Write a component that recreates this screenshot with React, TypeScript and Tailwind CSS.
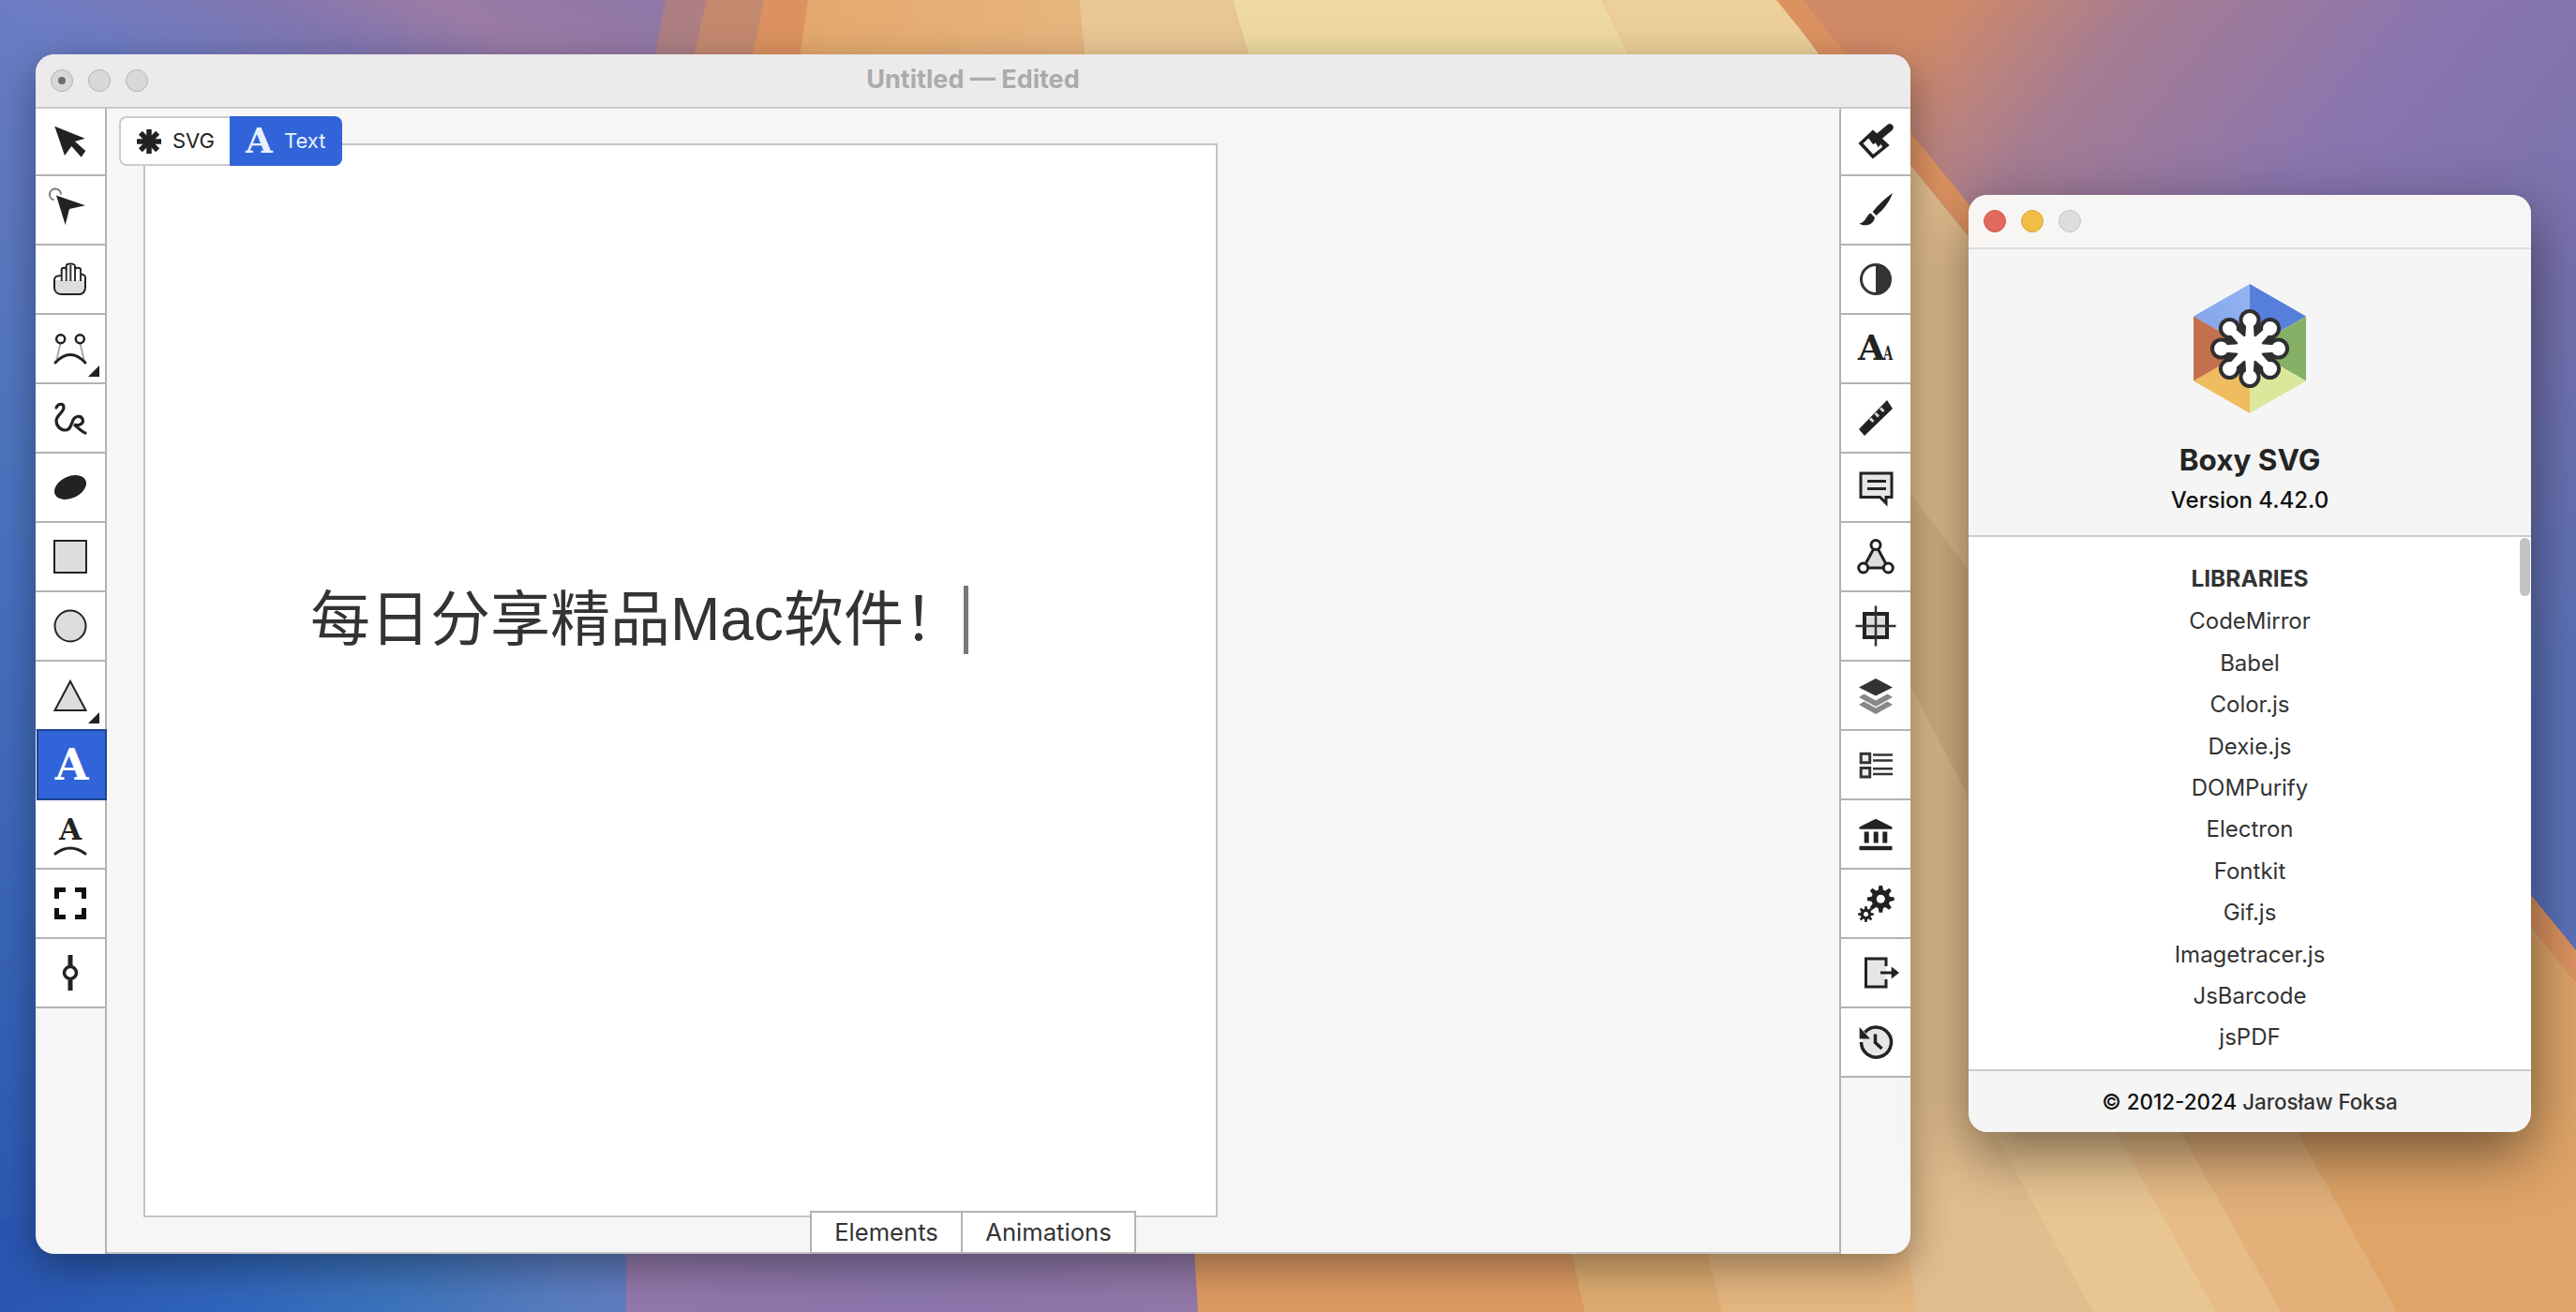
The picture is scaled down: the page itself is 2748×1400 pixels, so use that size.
import type { ReactNode } from "react";

const LIBRARIES = [
  "CodeMirror",
  "Babel",
  "Color.js",
  "Dexie.js",
  "DOMPurify",
  "Electron",
  "Fontkit",
  "Gif.js",
  "Imagetracer.js",
  "JsBarcode",
  "jsPDF",
];

function gearPath(cx: number, cy: number, ro: number, ri: number, n: number) {
  const pts: string[] = [];
  const step = (Math.PI * 2) / n;
  for (let i = 0; i < n; i++) {
    const a = i * step - Math.PI / 2;
    const list: [number, number][] = [
      [ri, a - step * 0.34],
      [ro, a - step * 0.16],
      [ro, a + step * 0.16],
      [ri, a + step * 0.34],
    ];
    for (const [r, t] of list) {
      pts.push(`${(cx + r * Math.cos(t)).toFixed(2)},${(cy + r * Math.sin(t)).toFixed(2)}`);
    }
  }
  return pts.join(" ");
}

function Icon({ children }: { children: ReactNode }) {
  return (
    <svg width="36" height="36" viewBox="0 0 36 36" className="overflow-visible">
      {children}
    </svg>
  );
}

const DARK = "#222222";
const SOFT = "#dddddd";
const HAND =
  "M1 19C1 16 3 14.500 5 14.500L8.700 14V8C8.700 5 13.700 5 13.700 8V4C13.700 .8 23 .8 23 4V8C23 5 29 5 29 8V13C31 12.500 34 13.500 34 16V27C34 31 31 34 28 34H9C4 34 1 31 1 27Z";

const leftIcons: ReactNode[] = [
  <Icon>
    <polygon points="1.3,1.7 33.7,14.7 23,18 34.3,28 29.7,34.7 19.3,23 12,33" fill={DARK} />
  </Icon>,
  <Icon>
    <path d="M0.5 7.3A6 6 0 1 1 8 1.5" fill="none" stroke="#777" strokeWidth="2" />
    <polygon points="3,2.5 34,13.3 17,17 12.7,34" fill={DARK} />
  </Icon>,
  <Icon>
    <path d={HAND} fill="#fff" />
    <path d="M2 19H33V27C33 31 31 33 28 33H9C4 33 2 31 2 27Z" fill={SOFT} />
    <path d={HAND} fill="none" stroke={DARK} strokeWidth="2" />
    <path d="M8.700 14V20M13.700 7V20M18.300 3V20M23 7V20M29 8V20" stroke="#333" strokeWidth="2" fill="none" />
  </Icon>,
  <Icon>
    <path d="M7.700 11L3 32M28.300 11L33 32" stroke="#aaa" strokeWidth="2" />
    <circle cx="7.700" cy="7.700" r="4.500" fill="#fff" stroke={DARK} strokeWidth="2.500" />
    <circle cx="28.300" cy="7.700" r="4.500" fill="#fff" stroke={DARK} strokeWidth="2.500" />
    <path d="M2 33Q18 16 34 33" fill="none" stroke={DARK} strokeWidth="3" strokeLinecap="round" />
  </Icon>,
  <Icon>
    <path
      d="M3 7C5 2 11 2 11 7C11 12 3 15 3 21C3 27 8 31 13 31C18 31 19 25 21 20C23 16 29 15 31 19C33 24 27 27 22 25C26 28 30 33 34 34"
      fill="none"
      stroke={DARK}
      strokeWidth="3.200"
      strokeLinecap="round"
    />
  </Icon>,
  <Icon>
    <ellipse cx="18" cy="18" rx="18" ry="11.500" transform="rotate(-25 18 18)" fill={DARK} />
  </Icon>,
  <Icon>
    <rect x="1" y="1" width="34" height="34" fill={SOFT} stroke={DARK} strokeWidth="2" />
  </Icon>,
  <Icon>
    <circle cx="18" cy="18" r="16.500" fill={SOFT} stroke={DARK} strokeWidth="2" />
  </Icon>,
  <Icon>
    <polygon points="18,3 34.500,34 1.500,34" fill={SOFT} stroke={DARK} strokeWidth="2" />
  </Icon>,
  null,
  <Icon>
    <text x="18" y="24" textAnchor="middle" fontSize="31" fontWeight="700" fill={DARK} className="font-['DejaVu_Serif',serif]">
      A
    </text>
    <path d="M2 39Q18 27 34 39" fill="none" stroke={DARK} strokeWidth="3" strokeLinecap="round" />
  </Icon>,
  <Icon>
    <path
      d="M1 1H13V6H6V13H1ZM35 1H23V6H30V13H35ZM1 35H13V30H6V23H1ZM35 35H23V30H30V23H35Z"
      fill="#111"
    />
  </Icon>,
  <Icon>
    <path d="M18 -1V10M18 26V37" stroke={DARK} strokeWidth="5" />
    <circle cx="18" cy="18" r="6.500" fill="#fff" stroke={DARK} strokeWidth="3.500" />
  </Icon>,
];

const rightIcons: ReactNode[] = [
  <Icon>
    <path d="M21 13L33 3" stroke={DARK} strokeWidth="7.500" strokeLinecap="round" />
    <polygon points="2,20 15,8 30,22 15,34" fill="#fff" stroke={DARK} strokeWidth="3.500" />
    <polygon points="15,8 30,22 26,25 23.500,21 20.500,24 18,19.500 15,21 10,14" fill={DARK} />
  </Icon>,
  <Icon>
    <path d="M36 0C30 4 21 12 14.700 20L18.500 24C26 18 33 9 36 0Z" fill={DARK} />
    <path d="M12.500 21.500C8 23 8 31 .5 32.500C5 36 15.500 35 17 26Z" fill={DARK} />
  </Icon>,
  <Icon>
    <circle cx="18" cy="18" r="15.500" fill="#fff" stroke="#333" strokeWidth="3" />
    <path d="M18 2.500A15.500 15.500 0 0 1 18 33.500Z" fill="#333" />
  </Icon>,
  <Icon>
    <text x="-1" y="30" fontSize="37" fontWeight="700" fill={DARK} className="font-['DejaVu_Serif',serif]">
      A
    </text>
    <text
      transform="translate(26 30) scale(0.65 1)"
      fontSize="20"
      fontWeight="700"
      fill={DARK}
      className="font-['DejaVu_Serif',serif]"
    >
      A
    </text>
  </Icon>,
  <Icon>
    <polygon points="0,30 30,-1 36,8 6,37" fill={DARK} />
    <path d="M12 18.500L15.500 22M17.500 13L21 16.500M23 7.500L26.500 11" stroke="#d5d5d5" strokeWidth="3" />
  </Icon>,
  <Icon>
    <path d="M2 3H35V28.500H29V35L22.500 28.500H2Z" fill="#e6e6e6" stroke={DARK} strokeWidth="3" />
    <path d="M9 11.500H29M9 19.500H29" stroke={DARK} strokeWidth="3" />
  </Icon>,
  <Icon>
    <polygon points="18,5.500 4.700,30 31.300,30" fill={SOFT} stroke={DARK} strokeWidth="3" />
    <circle cx="18" cy="5.500" r="5" fill="#fff" stroke={DARK} strokeWidth="3" />
    <circle cx="4.700" cy="30" r="5" fill="#fff" stroke={DARK} strokeWidth="3" />
    <circle cx="31.300" cy="30" r="5" fill="#fff" stroke={DARK} strokeWidth="3" />
  </Icon>,
  <Icon>
    <rect x="6" y="5" width="24" height="25" fill={SOFT} stroke={DARK} strokeWidth="4" />
    <path d="M18 -3.500V39.500M-3.500 18H39.500" stroke="#333" strokeWidth="2.500" />
  </Icon>,
  <Icon>
    <polygon points="18,0 36,9.500 18,18.500 0,9.500" fill="#333" />
    <path d="M0 20L5.500 16.500L18 23.500L30.500 16.500L36 20L18 30Z" fill="#888" />
    <path d="M0 28L5.500 24.500L18 31.500L30.500 24.500L36 28L18 38Z" fill="#888" />
  </Icon>,
  <Icon>
    <rect x="2.200" y="6.300" width="9.500" height="9.500" fill="#eee" stroke="#333" strokeWidth="3" />
    <rect x="2.200" y="21.500" width="9.500" height="9.500" fill="#eee" stroke="#333" strokeWidth="3" />
    <path d="M15 7.500H36M15 13.500H36M15 22.300H36M15 28H36" stroke="#333" strokeWidth="2.500" />
  </Icon>,
  <Icon>
    <polygon points="18,1.800 35.500,10.500 35.500,12.800 .5,12.800 .5,10.500" fill={DARK} />
    <rect x="5.700" y="15.500" width="5" height="12" fill={DARK} />
    <rect x="15.700" y="15.500" width="5" height="12" fill={DARK} />
    <rect x="25.300" y="15.500" width="5" height="12" fill={DARK} />
    <rect x=".5" y="30.800" width="35" height="4.400" fill={DARK} />
  </Icon>,
  <Icon>
    <polygon points={gearPath(23.3, 13.3, 14.5, 10, 8)} fill={DARK} />
    <circle cx="23.300" cy="13.300" r="4.500" fill="#fff" />
    <polygon points={gearPath(7.5, 29.5, 8.5, 5.8, 8)} fill={DARK} />
    <circle cx="7.500" cy="29.500" r="2.500" fill="#fff" />
  </Icon>,
  <Icon>
    <path d="M29 11V3H7.500V33H29V25" fill="#e6e6e6" stroke={DARK} strokeWidth="3" />
    <path d="M23 18H36" stroke={DARK} strokeWidth="3" />
    <polygon points="34.700,11.500 43,18 34.700,24.500" fill={DARK} />
  </Icon>,
  <Icon>
    <path d="M6.500 7.500A16 16 0 1 1 2.500 18" fill="#e6e6e6" stroke={DARK} strokeWidth="3.500" />
    <polygon points=".7,2 .7,14.500 12,14.500" fill={DARK} />
    <path d="M17.500 9.500V18.500L24.500 25" fill="none" stroke={DARK} strokeWidth="3.500" />
  </Icon>,
];

function Corner() {
  return (
    <svg width="12" height="12" viewBox="0 0 12 12" className="absolute right-[6px] bottom-[6px]">
      <polygon points="12,0 12,12 0,12" fill="#222" />
    </svg>
  );
}

function ToolButton({ icon, first, corner }: { icon: ReactNode; first?: boolean; corner?: boolean }) {
  return (
    <div
      className={`relative flex ${first ? "h-[72px]" : "h-[74px]"} w-full shrink-0 items-center justify-center border-b-2 border-[#b3b3b3] bg-white`}
    >
      {icon}
      {corner && <Corner />}
    </div>
  );
}

function Light({ color, edge, dot }: { color: string; edge: string; dot?: boolean }) {
  return (
    <div
      className="flex h-[24px] w-[24px] items-center justify-center rounded-full border"
      style={{ backgroundColor: color, borderColor: edge }}
    >
      {dot && <div className="h-[8px] w-[8px] rounded-full bg-[#6e6e6e]" />}
    </div>
  );
}

function Wallpaper() {
  return (
    <svg className="absolute inset-0" width="2748" height="1400" viewBox="0 0 2748 1400">
      <defs>
        <linearGradient id="blue" gradientUnits="userSpaceOnUse" x1="0" y1="1400" x2="700" y2="0">
          <stop offset="0" stopColor="#2a56b2" />
          <stop offset="0.5" stopColor="#4a74c0" />
          <stop offset="0.8" stopColor="#6b7cc4" />
          <stop offset="0.88" stopColor="#8276b0" />
          <stop offset="0.93" stopColor="#9a7ba5" />
          <stop offset="1" stopColor="#8f77a8" />
        </linearGradient>
        <linearGradient id="floor" gradientUnits="userSpaceOnUse" x1="0" y1="0" x2="668" y2="0">
          <stop offset="0" stopColor="#2a56b2" />
          <stop offset="0.37" stopColor="#3066bc" />
          <stop offset="0.64" stopColor="#3d74bc" />
          <stop offset="0.9" stopColor="#5a7cc0" />
          <stop offset="1" stopColor="#5f7cc0" />
        </linearGradient>
        <linearGradient id="right" gradientUnits="userSpaceOnUse" x1="2000" y1="100" x2="2748" y2="700">
          <stop offset="0" stopColor="#d08a68" />
          <stop offset="0.17" stopColor="#a67c92" />
          <stop offset="0.42" stopColor="#8b76ae" />
          <stop offset="0.7" stopColor="#7a72ae" />
          <stop offset="1" stopColor="#5a72b8" />
        </linearGradient>
        <linearGradient id="peach" gradientUnits="userSpaceOnUse" x1="862" y1="0" x2="1151" y2="0">
          <stop offset="0" stopColor="#e4a96e" />
          <stop offset="1" stopColor="#e7b57f" />
        </linearGradient>
        <linearGradient id="purple" gradientUnits="userSpaceOnUse" x1="668" y1="0" x2="1278" y2="0">
          <stop offset="0" stopColor="#9278aa" />
          <stop offset="0.5" stopColor="#8c76ac" />
          <stop offset="1" stopColor="#9278a8" />
        </linearGradient>
      </defs>
      <rect x="0" y="0" width="2748" height="1400" fill="url(#right)" />
      <polygon points="0,0 710,0 668,1400 0,1400" fill="url(#blue)" />
      <rect x="0" y="1300" width="668" height="100" fill="url(#floor)" />
      <polygon points="668,1300 1272,1300 1278,1400 668,1400" fill="url(#purple)" />

      <polygon points="710,0 754,0 740,60 698,60" fill="#ad7f84" />
      <polygon points="754,0 815,0 803,60 740,60" fill="#c48a70" />
      <polygon points="815,0 862,0 853,60 803,60" fill="#dc9260" />
      <polygon points="862,0 1151,0 1157,60 853,60" fill="url(#peach)" />
      <polygon points="1151,0 1315,0 1332,60 1157,60" fill="#e9c794" />
      <polygon points="1315,0 1709,0 1739,60 1332,60" fill="#eedaa0" />
      <polygon points="1709,0 1898,0 1942,60 1739,60" fill="#eccf99" />

      <polygon points="1895,0 1923,0 2748,1014 2748,1049" fill="#dc9260" />
      <polygon points="1942,58 2748,1049 2748,1400 1300,1400 1300,58" fill="#e2bd8e" />
      <polygon points="1272,1300 1668,1300 1691,1400 1278,1400" fill="#dd9a62" />
      <polygon points="1668,1300 1812,1300 1837,1400 1691,1400" fill="#deac72" />
      <polygon points="1812,1300 2030,1300 2045,1400 1837,1400" fill="#e4b680" />

      <polygon points="2100,1160 2100,1000 2142,1000 2364,1400 2233,1400" fill="#e9c592" />
      <polygon points="2142,1000 2211,1000 2433,1400 2364,1400" fill="#e7bc86" />
      <polygon points="2211,1000 2335,1000 2557,1400 2433,1400" fill="#e3b07a" />
      <polygon points="2335,1000 2500,744 2748,1049 2748,1400 2557,1400" fill="#dea468" />
      <polygon points="2038,527 2099,607 2099,848 2038,732" fill="#c9a878" opacity="0.5" />
    </svg>
  );
}

function Logo() {
  const angles = [0, 45, 90, 135, 180, 225, 270, 315];
  return (
    <svg width="120" height="138" viewBox="0 0 120 138">
      <defs>
        <linearGradient id="tl" x1="1" y1="0" x2="0" y2="1">
          <stop offset="0" stopColor="#94b4f2" />
          <stop offset="1" stopColor="#7fa2e8" />
        </linearGradient>
      </defs>
      <polygon points="60,69 60,0 0,34.500" fill="url(#tl)" />
      <polygon points="60,69 60,0 120,34.500" fill="#567fdc" />
      <polygon points="60,69 120,34.500 120,103.500" fill="#85b065" />
      <polygon points="60,69 120,103.500 60,138" fill="#dbe89c" />
      <polygon points="60,69 60,138 0,103.500" fill="#efbc60" />
      <polygon points="60,69 0,103.500 0,34.500" fill="#c2704e" />
      <circle cx="60" cy="69" r="29" fill="#2f2f2f" />
      {angles.map((a) => (
        <g key={a} transform={`rotate(${a} 60 69)`}>
          <circle cx="60" cy="38.500" r="11.500" fill="#2f2f2f" />
        </g>
      ))}
      <circle cx="60" cy="69" r="14" fill="#fff" />
      {angles.map((a) => (
        <g key={a} transform={`rotate(${a} 60 69)`}>
          <path d="M54.500 69L56.500 38.500H63.500L65.500 69Z" fill="#fff" />
          <circle cx="60" cy="38.500" r="7.500" fill="#fff" />
        </g>
      ))}
    </svg>
  );
}

function MainWindow() {
  const asterisk = [0, 45, 90, 135];
  return (
    <div className="absolute left-[38px] top-[58px] flex h-[1280px] w-[2000px] flex-col overflow-hidden rounded-[20px] bg-[#f6f6f6] shadow-[0_14px_44px_rgba(0,0,0,0.38)]">
      <div className="relative flex h-[58px] shrink-0 items-center gap-[16px] border-b-2 border-[#c9c9c9] bg-[#eceaeb] pl-[16px]">
        <Light color="#d9d7d8" edge="#b5b3b4" dot />
        <Light color="#d9d7d8" edge="#b5b3b4" />
        <Light color="#d9d7d8" edge="#b5b3b4" />
        <div className="absolute inset-x-0 top-0 flex h-[54px] items-center justify-center text-[27px] font-bold text-[#ababab]">
          Untitled — Edited
        </div>
      </div>

      <div className="flex min-h-0 flex-1">
        <div className="flex w-[76px] shrink-0 flex-col border-r-2 border-[#b3b3b3]">
          {leftIcons.map((icon, i) =>
            i === 9 ? (
              <div
                key={i}
                className="relative z-10 -mr-[2px] -mt-[2px] ml-[1px] flex h-[76px] shrink-0 items-center justify-center border-2 border-[#1f4590] bg-[#3064d8] font-['DejaVu_Serif',serif] text-[46px] font-bold leading-none text-white"
              >
                A
              </div>
            ) : (
              <ToolButton key={i} icon={icon} first={i === 0} corner={i === 3 || i === 8} />
            )
          )}
        </div>

        <div className="relative min-w-0 flex-1 border-b-2 border-[#c4c4c4] pl-[39px] pt-[37px]">
          <div className="flex h-[1146px] w-[1146px] items-start border-2 border-[#c4c4c4] bg-white pl-[176px] pt-[466px]">
            <span className="font-['Liberation_Sans','Noto_Sans_CJK_SC',sans-serif] text-[64px] leading-[80px] text-[#333333]">
              每日分享精品Mac软件！
            </span>
            <div className="ml-[0px] mt-[4px] h-[73px] w-[5px] shrink-0 bg-[#777777]" />
          </div>

          <div className="absolute left-[13px] top-[8px] flex h-[53px] text-[22px]">
            <div className="flex w-[118px] items-center gap-[12px] rounded-l-[8px] border-2 border-r-0 border-[#cccccc] bg-white pl-[17px] text-[#222222]">
              <svg width="26" height="26" viewBox="0 0 26 26">
                {asterisk.map((a) => (
                  <path key={a} d="M13 0V26" stroke="#222" strokeWidth="5.500" transform={`rotate(${a} 13 13)`} />
                ))}
              </svg>
              <span>SVG</span>
            </div>
            <div className="flex w-[120px] items-center rounded-r-[8px] bg-[#3064d8] pl-[17px] text-[#e8f0ff]">
              <span className="w-[41px] font-['DejaVu_Serif',serif] text-[37px] font-bold leading-none">A</span>
              <span>Text</span>
            </div>
          </div>

          <div className="absolute bottom-[-2px] left-[750px] flex h-[46px] text-[25.6px] text-[#333333]">
            <div className="flex w-[163px] items-center justify-center border-2 border-[#b3b3b3] bg-white">Elements</div>
            <div className="-ml-[2px] flex w-[187px] items-center justify-center border-2 border-[#b3b3b3] bg-white">
              Animations
            </div>
          </div>
        </div>

        <div className="flex w-[76px] shrink-0 flex-col border-l-2 border-[#b3b3b3]">
          {rightIcons.map((icon, i) => (
            <ToolButton key={i} icon={icon} first={i === 0} />
          ))}
        </div>
      </div>
    </div>
  );
}

function AboutWindow() {
  return (
    <div className="absolute left-[2100px] top-[208px] flex h-[1000px] w-[600px] flex-col overflow-hidden rounded-[20px] bg-[#f5f5f5] shadow-[0_22px_64px_rgba(0,0,0,0.5)]">
      <div className="flex h-[58px] shrink-0 items-center gap-[16px] border-b-2 border-[#dedede] bg-[#f8f6f5] pl-[16px]">
        <Light color="#e3695c" edge="#cf5a4e" />
        <Light color="#f0bd45" edge="#d9a837" />
        <Light color="#dddddd" edge="#c4c4c4" />
      </div>

      <div className="flex h-[307px] shrink-0 flex-col items-center border-b-2 border-[#cccccc] pt-[37px]">
        <Logo />
        <div className="mt-[32px] text-[31.5px] font-bold leading-[36px] text-[#242424]">Boxy SVG</div>
        <div className="mt-[10px] text-[24px] font-medium leading-[30px] text-[#111111]">Version 4.42.0</div>
      </div>

      <div className="relative min-h-0 flex-1 overflow-hidden bg-white pt-[22px] text-center text-[24px] leading-[44.4px] text-[#333333]">
        <div className="mb-[2px] text-[24.500px] font-bold">LIBRARIES</div>
        {LIBRARIES.map((name) => (
          <div key={name}>{name}</div>
        ))}
        <div className="absolute right-[1px] top-[1px] h-[62px] w-[11px] rounded-full bg-[#c2c2c2]" />
      </div>

      <div className="flex h-[67px] shrink-0 items-center justify-center border-t-2 border-[#cccccc] text-[22.400px] font-medium text-[#333333]">
        <span className="text-[#111111]">© 2012-2024</span>&nbsp;Jarosław Foksa
      </div>
    </div>
  );
}

export default function App() {
  return (
    <div className="relative h-[1400px] w-[2748px] overflow-hidden font-['Inter','Noto_Sans_CJK_SC',sans-serif]">
      <Wallpaper />
      <MainWindow />
      <AboutWindow />
    </div>
  );
}
